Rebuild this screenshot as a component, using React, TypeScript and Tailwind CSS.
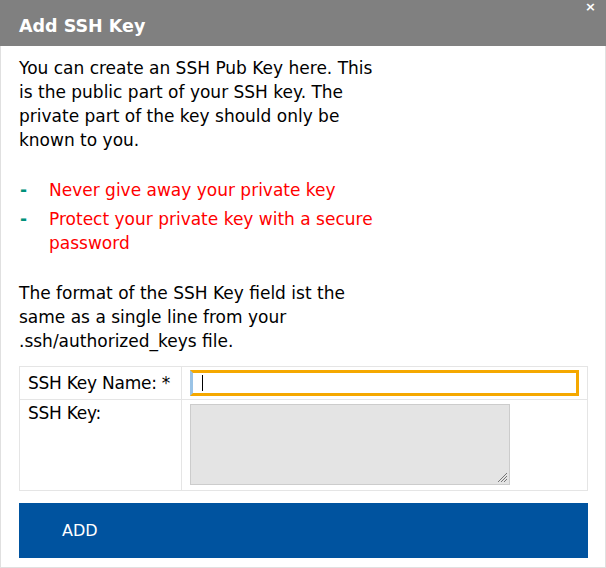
export default function App() {
  return (
    <div className="w-[606px] h-[568px] bg-white border border-[#e0e0e0] flex flex-col" style={{ fontFamily: '"DejaVu Sans", Verdana, sans-serif' }}>
      <div className="relative h-[46px] -mx-px -mt-px bg-[#808080] flex items-center px-[19px] pt-[6px]">
        <span className="text-white font-bold text-[17.5px]">Add SSH Key</span>
        <span className="absolute right-[10px] top-0 text-white font-bold text-[13px] leading-[14px]">×</span>
      </div>
      <div className="px-[18px] pt-[10px] text-[17px] leading-[24px] text-black">
        <p className="w-[362px]">You can create an SSH Pub Key here. This is the public part of your SSH key. The private part of the key should only be known to you.</p>
        <ul className="mt-[26px] flex flex-col gap-[5px]">
          <li className="flex">
            <span className="w-[30px] pl-[1px] text-[#00917a] font-bold">-</span>
            <span className="text-[#ff0000]">Never give away your private key</span>
          </li>
          <li className="flex">
            <span className="w-[30px] pl-[1px] text-[#00917a] font-bold shrink-0">-</span>
            <span className="text-[#ff0000] w-[360px]">Protect your private key with a secure password</span>
          </li>
        </ul>
        <p className="mt-[26px] w-[362px]">The format of the SSH Key field ist the same as a single line from your .ssh/authorized_keys file.</p>
        <table className="mt-[13px] w-[569px] border-collapse table-fixed">
          <colgroup>
            <col className="w-[162px]" />
            <col />
          </colgroup>
          <tbody>
            <tr className="h-[32px]">
              <td className="whitespace-nowrap border border-[#e5e5e5] pl-[8px] pr-0 align-middle tracking-[-0.25px]">SSH Key Name: *</td>
              <td className="border border-[#e5e5e5] px-[8px] py-[3px]">
                <div className="h-[26px] border-[3px] border-[#f5a800] border-l-[#9ac3e6] flex items-center pl-[9px]">
                  <span className="w-px h-[16px] bg-black" />
                </div>
              </td>
            </tr>
            <tr className="h-[91px]">
              <td className="border border-[#e5e5e5] pl-[8px] align-top pt-[1px] tracking-[-0.25px]">SSH Key:</td>
              <td className="border border-[#e5e5e5] px-[8px] align-top pt-[4px]">
                <div className="relative w-[320px] h-[81px] bg-[#e4e4e4] border border-[#cccccc]">
                  <svg className="absolute right-[1px] bottom-[1px]" width="12" height="12" viewBox="0 0 12 12">
                    <path d="M11 2 L2 11 M11 5 L5 11 M11 8 L8 11" stroke="#777" strokeWidth="1" />
                  </svg>
                </div>
              </td>
            </tr>
          </tbody>
        </table>
        <button className="mt-[12px] w-[569px] h-[55px] bg-[#00539f] text-white text-left pl-[43px] text-[16px]">ADD</button>
      </div>
    </div>
  );
}
